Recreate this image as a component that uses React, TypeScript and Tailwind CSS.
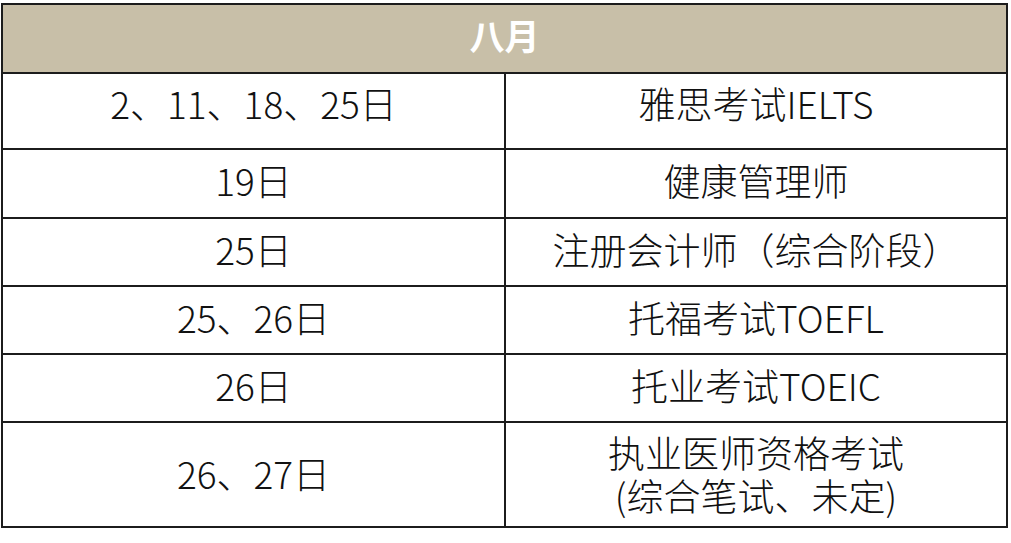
import React from 'react'

const rows: { date: string; exam: string; h: string; pad: string }[] = [
  { date: '2、11、18、25日', exam: '雅思考试IELTS', h: 'h-[76px]', pad: 'pb-[16px]' },
  { date: '19日', exam: '健康管理师', h: 'h-[69px]', pad: 'pb-[6px]' },
  { date: '25日', exam: '注册会计师（综合阶段）', h: 'h-[68px]', pad: 'pb-[5px]' },
  { date: '25、26日', exam: '托福考试TOEFL', h: 'h-[68px]', pad: 'pb-[5px]' },
  { date: '26日', exam: '托业考试TOEIC', h: 'h-[68px]', pad: 'pb-[5px]' },
  { date: '26、27日', exam: '执业医师资格考试\n(综合笔试、未定)', h: 'h-[103px]', pad: 'pb-[2px]' },
]

export default function App() {
  return (
    <div lang="zh-CN" className="w-[1011px] h-[543px] bg-white pt-[3px] pl-[1px]" style={{ fontFamily: '"Noto Sans CJK SC", "Liberation Sans", sans-serif' }}>
      <div className="w-[1007px] border-2 border-[#1c1c1c]">
        {/* header */}
        <div className="h-[69px] bg-[#c8bfa8] border-b-2 border-[#1c1c1c] flex items-center justify-center pb-[8px]">
          <span className="text-white text-[35px] font-bold leading-none">八月</span>
        </div>
        {rows.map((r, i) => (
          <div
            key={i}
            className={`grid grid-cols-[503px_1fr] box-border ${r.h} ${i < rows.length - 1 ? 'border-b-2 border-[#1c1c1c]' : ''}`}
          >
            <div className={`border-r-2 border-[#1c1c1c] flex items-center justify-center text-[37px] font-light text-[#111] leading-none ${r.pad}`}>
              {r.date}
            </div>
            <div className={`flex items-center justify-center text-center text-[37px] font-light text-[#111] leading-[43px] ${r.pad}`}>
              <p className="whitespace-pre-line">{r.exam}</p>
            </div>
          </div>
        ))}
      </div>
    </div>
  )
}
